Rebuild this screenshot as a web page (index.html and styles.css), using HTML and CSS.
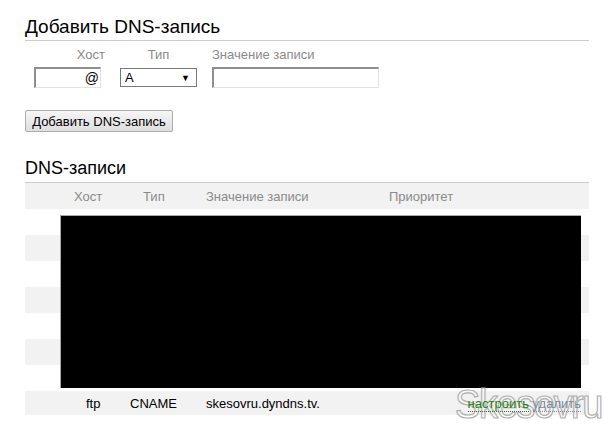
FILE: index.html
```html
<!DOCTYPE html>
<html>
<head>
<meta charset="utf-8">
<link rel="stylesheet" href="styles.css">
</head>
<body>
<div class="page">
  <h2 class="title">Добавить DNS-запись</h2>
  <div class="form">
    <div class="field host">
      <span class="label">Хост</span>
      <div class="input host-input">@</div>
    </div>
    <div class="field type">
      <span class="label">Тип</span>
      <div class="select"><span>A</span><span class="arrow">▼</span></div>
    </div>
    <div class="field value">
      <span class="label">Значение записи</span>
      <div class="input value-input"></div>
    </div>
  </div>
  <button class="btn">Добавить DNS-запись</button>

  <h2 class="title title2">DNS-записи</h2>
  <div class="table">
    <div class="row head">
      <span class="c-host">Хост</span>
      <span class="c-type">Тип</span>
      <span class="c-val">Значение записи</span>
      <span class="c-prio">Приоритет</span>
    </div>
    <div class="row"></div>
    <div class="row alt"></div>
    <div class="row"></div>
    <div class="row alt"></div>
    <div class="row"></div>
    <div class="row alt"></div>
    <div class="row"></div>
    <div class="row alt last">
      <span class="c-host">ftp</span>
      <span class="c-type">CNAME</span>
      <span class="c-val">skesovru.dyndns.tv.</span>
      <span class="actions"><a class="edit">настроить</a> <a class="del">удалить</a></span>
    </div>
    <div class="redact"></div>
  </div>
  <div class="watermark">Skesovru</div>
</div>
</body>
</html>
```
FILE: styles.css
```css
html, body {
  margin: 0;
  padding: 0;
  background: #fff;
}
body {
  font-family: "Liberation Sans", Arial, sans-serif;
  color: #000;
}
.page {
  position: relative;
  width: 613px;
  height: 429px;
  padding: 16px 24px 0 25px;
  box-sizing: border-box;
}
.title {
  margin: 0;
  font-weight: normal;
  font-size: 19px;
  line-height: 22px;
  padding-bottom: 2px;
  border-bottom: 1px solid #cccccc;
}
.form {
  display: flex;
  margin-top: 6px;
  padding-left: 9px;
}
.field {
  display: flex;
  flex-direction: column;
}
.label {
  font-size: 13px;
  color: #8a8a8a;
  line-height: 15px;
  height: 20px;
  white-space: nowrap;
}
.host {
  width: 67px;
  align-items: flex-end;
}
.host .label {
  margin-right: -4px;
}
.type {
  margin-left: 19px;
  width: 77px;
  align-items: center;
}
.value {
  margin-left: 15px;
}
.input {
  box-sizing: border-box;
  height: 21px;
  border: 1px solid #e3e3e3;
  border-top: 2px solid #8f8f8f;
  border-left: 2px solid #8f8f8f;
  background: #fff;
  font-size: 14px;
  line-height: 18px;
}
.host-input {
  width: 67px;
  text-align: right;
  padding-right: 1px;
}
.value-input {
  width: 167px;
}
.select {
  box-sizing: border-box;
  width: 77px;
  height: 19px;
  margin-top: 1px;
  border: 1px solid #7a7a7a;
  display: flex;
  justify-content: space-between;
  align-items: center;
  padding: 0 6px 0 4px;
  font-size: 13px;
}
.select .arrow {
  font-size: 9px;
}
.btn {
  display: block;
  margin-top: 22px;
  height: 22px;
  width: 148px;
  padding: 0;
  font-family: "Liberation Sans", Arial, sans-serif;
  font-size: 13px;
  color: #000;
  border: 1px solid #adadad;
  border-radius: 2px;
  background: linear-gradient(#f6f6f6, #dedede);
}
.title2 {
  margin-top: 26px;
  font-size: 18px;
  line-height: 21px;
  border-bottom: none;
  padding-bottom: 0;
}
.table {
  position: relative;
  margin-top: 3px;
  width: 564px;
  border-top: 1px solid #cccccc;
}
.row {
  display: flex;
  align-items: center;
  height: 26px;
  font-size: 13px;
  white-space: nowrap;
}
.head {
  background: #f2f2f2;
  color: #8a8a8a;
}
.alt {
  background: #f2f2f2;
}
.last {
  height: 24px;
  color: #000;
}
.c-host {
  width: 118px;
  padding-left: 49px;
  box-sizing: border-box;
}
.last .c-host {
  padding-left: 61px;
}
.c-type {
  width: 63px;
}
.last .c-type {
  margin-left: -13px;
  width: 76px;
}
.c-val {
  width: 183px;
}
.c-prio {
  width: 90px;
}
.actions {
  margin-left: auto;
  padding-right: 8px;
  position: relative;
  z-index: 4;
}
.actions a {
  text-decoration: none;
  border-bottom: 1px dotted;
}
.edit {
  color: #2b7d12;
}
.del {
  color: #7d8a9c;
}
.redact {
  position: absolute;
  left: 35px;
  top: 32px;
  width: 521px;
  height: 173px;
  background: #000;
  border-top: 1px solid #aaaaaa;
  border-left: 1px solid #aaaaaa;
  box-sizing: border-box;
}
.watermark {
  position: absolute;
  left: 455px;
  top: 382px;
  font-size: 40px;
  font-family: "Liberation Sans", Arial, sans-serif;
  color: rgba(255,255,255,0.35);
  -webkit-text-stroke: 1.2px #b0b0b0;
  letter-spacing: -1.5px;
  transform: scaleX(0.95);
  transform-origin: left top;
  z-index: 3;
  pointer-events: none;
}
```
